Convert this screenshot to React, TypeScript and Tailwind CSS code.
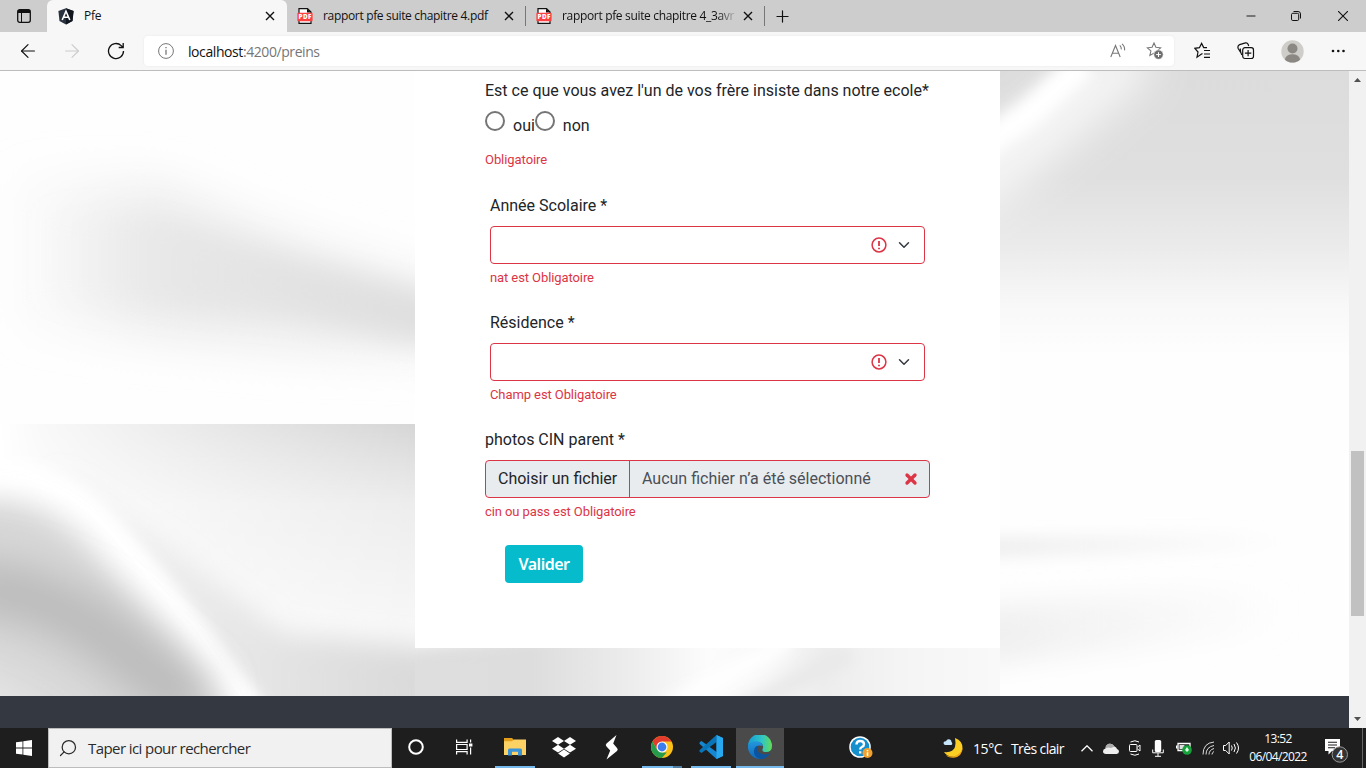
import React from "react";
import { ArrowLeft, ArrowRight, X, Plus, Search, Minus } from "lucide-react";

const UI = "font-['Open_Sans','Noto_Sans',sans-serif]";

function PdfIcon() {
  return (
    <svg width="16" height="16" viewBox="0 0 16 16" className="shrink-0">
      <path d="M2 .6h8.5L14 4v11.4H2z" fill="#fff" stroke="#111" strokeWidth="1.2" />
      <path d="M10 .6V4.4H14z" fill="#111" />
      <rect x=".4" y="4.8" width="15.2" height="8.4" rx=".8" fill="#fb4141" />
      <text x="1.5" y="11.3" fill="#fff" fontSize="6.3" fontWeight="800" fontFamily="Open Sans" textLength="13">PDF</text>
    </svg>
  );
}

function Close() {
  return (
    <svg width="10" height="10" viewBox="0 0 10 10" className="shrink-0">
      <path d="M1 1l8 8M9 1L1 9" stroke="#111" strokeWidth="1.4" />
    </svg>
  );
}

function TitleBar() {
  return (
    <div className="flex h-8 shrink-0 bg-[#cdcdcd]">
      <div className="flex w-[47px] items-center justify-center">
        <svg width="14" height="14" viewBox="0 0 14 14">
          <rect x=".7" y=".7" width="12.6" height="12.6" rx="2" fill="none" stroke="#111" strokeWidth="1.3" />
          <path d="M1 1h12v3H1z" fill="#111" />
          <path d="M4.5 4v9" stroke="#111" strokeWidth="1" />
        </svg>
      </div>
      <div className="flex w-60 items-center rounded-t-md bg-[#f7f7f7] pr-[12px] pl-[11px]">
        <svg width="16" height="17" viewBox="0 0 16 17">
          <path d="M8 .3l7.6 2.6-1.1 10L8 16.6l-6.5-3.7L.4 2.9z" fill="#29323f" />
          <path d="M8 .3l7.6 2.6-1.1 10L8 16.6z" fill="#10151f" />
          <path d="M4.2 12L8 3.2l3.8 8.8M5.8 9.3h4.4" fill="none" stroke="#fff" strokeWidth="1.6" />
        </svg>
        <span className={`${UI} ml-[10px] flex-1 text-[12px] tracking-[-0.3px] text-[#111]`}>Pfe</span>
        <Close />
      </div>
      <div className="flex w-[239px] items-center pl-[10px]">
        <PdfIcon />
        <span className={`${UI} ml-[10px] w-[181px] text-[12px] tracking-[-0.33px] whitespace-nowrap text-[#111]`}>
          rapport pfe suite chapitre 4.pdf
        </span>
        <Close />
        <div className="ml-[11px] h-5 w-px bg-[#777]" />
      </div>
      <div className="flex w-[239px] items-center pl-[10px]">
        <PdfIcon />
        <div className="ml-[10px] flex w-[181px]">
          <span
            className={`${UI} bg-[linear-gradient(90deg,#111_90%,#b5b5b5)] bg-clip-text pr-px text-[12px] tracking-[-0.33px] whitespace-nowrap text-transparent`}
          >
            rapport pfe suite chapitre 4_3avr
          </span>
        </div>
        <Close />
        <div className="ml-[11px] h-5 w-px bg-[#777]" />
      </div>
      <div className="flex flex-1 items-center pl-[8px]">
        <Plus size={19} strokeWidth={1.5} color="#111" />
      </div>
      <div className="flex items-center">
        <Minus size={14} strokeWidth={1.6} color="#111" className="mr-[33px]" />
        <svg width="10" height="10" viewBox="0 0 10 10" fill="none" stroke="#111" className="mr-[37px]">
          <rect x=".5" y="2.3" width="7.2" height="7.2" rx="1.3" />
          <path d="M2.5.5h4.5a2.5 2.5 0 0 1 2.5 2.5v4.5" />
        </svg>
        <svg width="10" height="10" viewBox="0 0 10 10" stroke="#111" className="mr-[18px]">
          <path d="M0 0l10 10M10 0L0 10" strokeWidth="1.1" />
        </svg>
      </div>
    </div>
  );
}

const STAR = "M7.5 1l1.9 4.3 4.7.5-3.5 3.1 1 4.6-4.1-2.4-4.1 2.4 1-4.6L.9 5.8l4.7-.5z";

function AddressBar() {
  return (
    <div className="flex h-[39px] shrink-0 items-center border-b border-[#bdbdbd] bg-[#f7f7f7]">
      <ArrowLeft size={22} strokeWidth={1.3} color="#111" className="ml-[17px]" />
      <ArrowRight size={22} strokeWidth={1.3} color="#ccc" className="ml-[22px]" />
      <svg width="18" height="18" viewBox="0 0 18 18" className="ml-6" fill="none" stroke="#111" strokeWidth="1.3">
        <path d="M16.5 9a7.5 7.5 0 1 1-2.3-5.4L16 5.3M16.2 1v4.5h-4.5" />
      </svg>
      <div className="ml-[19px] flex h-[30px] w-[1030px] items-center rounded bg-white pl-[14px] shadow-[0_0_2px_#e5e5e5]">
        <svg width="16" height="16" viewBox="0 0 16 16" fill="none" stroke="#777">
          <circle cx="8" cy="8" r="7.4" />
          <path d="M8 6.7v5M8 4v1.3" strokeWidth="1.3" />
        </svg>
        <span className={`${UI} ml-[14px] flex-1 text-[14px] tracking-[-0.42px] text-[#767676]`}>
          <span className="text-[#111]">localhost</span>:4200/preins
        </span>
        <svg width="16" height="16" viewBox="0 0 16 16" fill="none" stroke="#777" className="mr-5">
          <path d="M.8 14L5.5 2.5 10.2 14M2.4 10.2h6.2M9.8 2.4q1.7 1.5 1.5 4M12 .9q3 2.4 2.6 6.5" strokeWidth="1.1" />
        </svg>
        <svg width="18" height="18" viewBox="0 0 18 18" fill="none" className="mr-[10px]">
          <path d={STAR} transform="translate(.5 0)" stroke="#777" strokeWidth="1.1" />
          <circle cx="12.5" cy="12.6" r="4.7" fill="#6d6d6d" stroke="#fff" strokeWidth=".6" />
          <path d="M12.5 10.2v4.8M10.1 12.6h4.8" stroke="#fff" />
        </svg>
      </div>
      <svg width="18" height="18" viewBox="0 0 18 18" fill="none" stroke="#111" strokeWidth="1.2" className="ml-5">
        <path d="M8.5 11.5L7.2 12.3 3 15.2l1-5.2L.9 6.3l4.5-.6L7.6 1.4l2.1 4.2h3.3M10 8.5h6M10 12h6M10 15.3h6" />
      </svg>
      <svg width="18" height="18" viewBox="0 0 18 18" fill="none" stroke="#111" strokeWidth="1.2" className="ml-[25px]">
        <path d="M4 11L1.2 6.5Q.2 3.6 2.6 2.6L8.500.9q1.800-.4 2.600 1.400l.6 1.700M4.800 13Q3.200 10 3.300 6.500" />
        <rect x="5.700" y="5.700" width="10.800" height="10.800" rx="2.200" fill="#f7f7f7" />
        <path d="M11.100 7.900v6.400M7.900 11.100h6.400" />
      </svg>
      <svg width="23" height="23" viewBox="0 0 23 23" className="ml-[26px]">
        <circle cx="11.5" cy="11.5" r="11.2" fill="#cfcdc9" />
        <circle cx="11.5" cy="8.5" r="5" fill="#8b8783" />
        <path d="M3.8 19.4a8 7 0 0 1 15.4 0 11 11 0 0 1-15.4 0" fill="#8b8783" />
      </svg>
      <svg width="14" height="4" viewBox="0 0 14 4" className="ml-[27px]" fill="#111">
        <circle cx="2" cy="2" r="1.3" />
        <circle cx="7.3" cy="2" r="1.3" />
        <circle cx="12.5" cy="2" r="1.3" />
      </svg>
    </div>
  );
}

function Backdrop() {
  return (
    <svg className="absolute inset-0" width="1349" height="625" viewBox="0 0 1349 625">
      <defs>
        <filter id="b6" filterUnits="userSpaceOnUse" x="-100" y="-100" width="1600" height="900"><feGaussianBlur stdDeviation="7" /></filter>
        <filter id="b12" filterUnits="userSpaceOnUse" x="-100" y="-100" width="1600" height="900"><feGaussianBlur stdDeviation="13" /></filter>
        <filter id="b22" filterUnits="userSpaceOnUse" x="-100" y="-100" width="1600" height="900"><feGaussianBlur stdDeviation="22" /></filter>
        <linearGradient id="rightFade" x1="0" y1="0" x2="0" y2="1">
          <stop offset="0" stopColor="#dcdcdc" />
          <stop offset=".37" stopColor="#dfdfdf" />
          <stop offset=".62" stopColor="#ebebeb" />
          <stop offset=".82" stopColor="#f8f8f8" />
          <stop offset="1" stopColor="#fefefe" />
        </linearGradient>
        <linearGradient id="topShade" x1="0" y1="0" x2="0" y2="1">
          <stop offset="0" stopColor="#d6d6d6" />
          <stop offset=".15" stopColor="#dfdfdf" />
          <stop offset=".4" stopColor="#ededed" />
          <stop offset="1" stopColor="#f7f7f7" />
        </linearGradient>
        <linearGradient id="leftWhite" gradientUnits="userSpaceOnUse" x1="0" y1="0" x2="415" y2="0">
          <stop offset="0" stopColor="#fff" />
          <stop offset=".1" stopColor="#fff" stopOpacity=".85" />
          <stop offset=".5" stopColor="#fff" stopOpacity=".45" />
          <stop offset="1" stopColor="#fff" stopOpacity="0" />
        </linearGradient>
        <linearGradient id="bandWide" gradientUnits="userSpaceOnUse" x1="0" y1="0" x2="160" y2="0">
          <stop offset="0" stopColor="#ededed" stopOpacity="0" />
          <stop offset="1" stopColor="#ededed" />
        </linearGradient>
        <linearGradient id="bandCore" gradientUnits="userSpaceOnUse" x1="40" y1="0" x2="415" y2="0">
          <stop offset="0" stopColor="#dddddd" stopOpacity="0" />
          <stop offset=".4" stopColor="#dddddd" stopOpacity=".4" />
          <stop offset="1" stopColor="#dddddd" stopOpacity=".9" />
        </linearGradient>
        <linearGradient id="foldShade" gradientUnits="userSpaceOnUse" x1="50" y1="0" x2="415" y2="0">
          <stop offset="0" stopColor="#dadada" stopOpacity=".25" />
          <stop offset=".35" stopColor="#dadada" stopOpacity=".45" />
          <stop offset=".65" stopColor="#dadada" stopOpacity=".7" />
          <stop offset="1" stopColor="#dadada" />
        </linearGradient>
        <linearGradient id="fadeRight" gradientUnits="userSpaceOnUse" x1="1000" y1="0" x2="1290" y2="0">
          <stop offset="0" stopColor="#f0f0f0" />
          <stop offset="1" stopColor="#f0f0f0" stopOpacity="0" />
        </linearGradient>
        <linearGradient id="strip" gradientUnits="userSpaceOnUse" x1="415" y1="610" x2="1000" y2="610">
          <stop offset="0" stopColor="#dedede" />
          <stop offset=".2" stopColor="#dddddd" />
          <stop offset=".38" stopColor="#eeeeee" />
          <stop offset=".5" stopColor="#fcfcfc" />
          <stop offset=".6" stopColor="#f8f8f8" />
          <stop offset=".7" stopColor="#ededed" />
          <stop offset=".85" stopColor="#f5f5f5" />
          <stop offset="1" stopColor="#f9f9f9" />
        </linearGradient>
        <clipPath id="upper"><rect width="415" height="353" /></clipPath>
        <clipPath id="lower"><rect y="353" width="415" height="272" /></clipPath>
        <clipPath id="mid"><rect x="415" y="577" width="585" height="48" /></clipPath>
        <clipPath id="right"><rect x="1000" width="349" height="625" /></clipPath>
      </defs>
      <rect width="1349" height="625" fill="#fefefe" />
      <g clipPath="url(#upper)">
        <path d="M0 105L160 112 290 165 480 225V285L300 280 0 255z" fill="url(#bandWide)" filter="url(#b22)" />
        <path d="M40 140L160 145 283 182 480 238V272L400 268 283 245 40 230z" fill="url(#bandCore)" filter="url(#b12)" />
      </g>
      <g clipPath="url(#lower)">
        <rect y="353" width="415" height="200" fill="url(#topShade)" />
        <rect y="552" width="415" height="75" fill="#f7f7f7" />
        <rect y="353" width="415" height="272" fill="url(#leftWhite)" />
        <path d="M50 398L167 475 283 562 520 588V700H290L160 520z" fill="url(#foldShade)" filter="url(#b12)" />
        <path d="M-40 402Q50 394 105 454T256 645" fill="none" stroke="#fff" strokeWidth="28" filter="url(#b6)" />
        <path d="M-60 428H0Q55 436 90 478T175 572L240 670H-60z" fill="#d8d8d8" filter="url(#b12)" />
        <path d="M-40 512L30 525 90 553 200 640" fill="none" stroke="#b8b8b8" strokeWidth="52" filter="url(#b22)" />
        <path d="M-40 590L90 665H-40z" fill="#e8e8e8" filter="url(#b22)" />
      </g>
      <g clipPath="url(#mid)">
        <rect x="415" y="577" width="585" height="48" fill="url(#strip)" />
        <path d="M400 565H560L400 580z" fill="#f2f2f2" filter="url(#b6)" />
        <path d="M660 640L790 570" stroke="#fff" strokeWidth="16" filter="url(#b6)" />
        <path d="M740 640L850 582" stroke="#e9e9e9" strokeWidth="20" filter="url(#b6)" />
      </g>
      <g clipPath="url(#right)">
        <rect x="1000" width="349" height="285" fill="url(#rightFade)" />
        <path d="M960 125L1030 72 1140-20" fill="none" stroke="#fff" strokeWidth="50" strokeOpacity=".8" filter="url(#b22)" />
        <path d="M980 78L1030 42 1085-8" fill="none" stroke="#fff" strokeWidth="30" filter="url(#b6)" />
        <path d="M960 466L1290 460V480L960 488z" fill="url(#fadeRight)" filter="url(#b6)" />
        <path d="M940 538L1180 520 1290 520V560L940 600z" fill="url(#fadeRight)" filter="url(#b12)" />
      </g>
    </svg>
  );
}

function SelectField({ label, error }: { label: string; error: string }) {
  return (
    <div className="mx-[5px] h-[117px]">
      <div className="pt-px text-[16px] leading-6">{label}</div>
      <div className="mt-2 flex h-[38px] items-center justify-end rounded border border-[#dc3545] bg-white pr-[14px]">
        <svg width="16" height="16" viewBox="0 0 16 16" fill="none" stroke="#dc3545" strokeWidth="1.5">
          <circle cx="8" cy="8" r="6.9" />
          <path d="M8 4v5M8 10.7v1.6" strokeWidth="1.8" />
        </svg>
        <svg width="12" height="12" viewBox="0 0 16 16" fill="none" stroke="#343a40" strokeWidth="2" strokeLinecap="round" strokeLinejoin="round" className="ml-[11px]">
          <path d="M2 5l6 6 6-6" />
        </svg>
      </div>
      <div className="mt-1 text-[13px] leading-5 tracking-[-0.09px] text-[#dc3545]">{error}</div>
    </div>
  );
}

function Radio({ label }: { label: string }) {
  return (
    <label className="flex">
      <span className="h-5 w-5 rounded-full border-2 border-[#757575]" />
      <span className="mt-[3px] ml-2 text-[16px] leading-6">{label}</span>
    </label>
  );
}

function FormCard() {
  return (
    <div className="relative ml-[415px] h-[577px] w-[585px] bg-white pr-[70px] pl-[70px] font-[Roboto,sans-serif] text-[#212529]">
      <div className="pt-2 text-[16px] leading-6 whitespace-nowrap">
        Est ce que vous avez l'un de vos frère insiste dans notre ecole*
      </div>
      <div className="mt-2 flex h-[39px]">
        <Radio label="oui" />
        <Radio label="non" />
      </div>
      <div className="text-[13px] leading-5 tracking-[-0.06px] text-[#dc3545]">Obligatoire</div>
      <div className="mt-[23px]">
        <SelectField label="Année Scolaire *" error="nat est Obligatoire" />
        <SelectField label="Résidence *" error="Champ est Obligatoire" />
      </div>
      <div className="pt-px text-[16px] leading-6">photos CIN parent *</div>
      <div className="mt-2 flex h-[38px] items-center overflow-hidden rounded border border-[#dc3545] bg-[#e9ecef] text-[16px]">
        <div className="flex h-full w-[144px] items-center border-r border-[#dc3545] pl-3 whitespace-nowrap">Choisir un fichier</div>
        <div className="flex-1 pl-3 whitespace-nowrap text-[#495057]">Aucun fichier n’a été sélectionné</div>
        <X size={16} strokeWidth={5} color="#dc3545" className="mr-[10px]" />
      </div>
      <div className="mt-1 text-[13px] leading-5 tracking-[-0.09px] text-[#dc3545]">cin ou pass est Obligatoire</div>
      <button className="mt-[23px] ml-5 flex h-[38px] w-[78px] items-center justify-center rounded bg-[#06bbcc] font-['Noto_Sans','Open_Sans',sans-serif] text-[16px] font-semibold tracking-[-0.5px] text-white">
        Valider
      </button>
    </div>
  );
}

function ScrollBar() {
  return (
    <div className="flex w-[17px] flex-col items-center bg-[#f1f1f1]">
      <svg width="17" height="17" viewBox="0 0 17 17"><path d="M5 11l3.5-4L12 11z" fill="#505050" /></svg>
      <div className="mt-[363px] h-[165px] w-[13px] bg-[#c1c1c1]" />
      <div className="flex-1" />
      <svg width="17" height="17" viewBox="0 0 17 17"><path d="M5 6l3.5 4L12 6z" fill="#505050" /></svg>
    </div>
  );
}

function AppButton({ children, line = false, active = false, split = false }: { children: React.ReactNode; line?: boolean; active?: boolean; split?: boolean }) {
  return (
    <div className={`flex h-10 w-12 flex-col items-center ${active ? "bg-[#4a4a4a]" : ""}`}>
      <div className="flex h-[38px] items-center">{children}</div>
      <div className={`flex h-[2px] justify-end ${active ? "w-12" : "w-10"} ${line ? "bg-[#76b9ed]" : ""}`}>
        {split && <div className="h-[2px] w-[9px] bg-[#527ea1]" />}
      </div>
    </div>
  );
}

function TaskBar() {
  return (
    <div className={`flex h-10 shrink-0 items-center bg-[#1e1e1e] text-white ${UI}`}>
      <div className="flex h-10 w-12 items-center justify-center">
        <svg width="16" height="16" viewBox="0 0 16 16" fill="#fff">
          <path d="M0 2.3l6.5-.9v6.2H0zM7.3 1.3L16 0v7.6H7.3zM0 8.4h6.5v6.2L0 13.7zM7.3 8.4H16V16l-8.7-1.2z" />
        </svg>
      </div>
      <div className="flex h-10 w-[344px] items-center border border-[#bcbcbc] bg-[#f1f1f1] pl-[9px] text-[#2b2b2b]">
        <Search size={20} strokeWidth={1.5} className="-scale-x-100" />
        <span className="ml-[10px] text-[15px] tracking-[-0.58px]">Taper ici pour rechercher</span>
      </div>
      <AppButton>
        <svg width="16" height="16" viewBox="0 0 16 16"><circle cx="8" cy="8" r="6.8" fill="none" stroke="#fff" strokeWidth="2" /></svg>
      </AppButton>
      <AppButton>
        <svg width="17" height="16" viewBox="0 0 17 16" fill="none" stroke="#fff" strokeWidth="1.2">
          <path d="M.6.5v2.8h10.5V.5M.6 15.5v-2.8h10.5v2.8M.6 5.5h10.5v5H.6zM14.6.5v3M14.6 8.5v7" />
          <path d="M13 4.5h3.4v3H13z" fill="#fff" stroke="none" />
        </svg>
      </AppButton>
      <div className="ml-[3px] flex">
        <AppButton line>
          <svg width="22" height="18" viewBox="0 0 22 18">
            <path d="M0 0h8l2 2v4H0z" fill="#e5a01b" />
            <path d="M0 3.2h8L10 1.5h12V17H0z" fill="#fdd264" />
            <path d="M4 17.5V12q0-1.500 1.500-1.500h11q1.500 0 1.500 1.500v5.500h-4v-3.700H8v3.700z" fill="#3b93d8" />
          </svg>
        </AppButton>
        <AppButton>
          <svg width="24" height="21" viewBox="0 0 24 21" fill="#fff" className="ml-[2px]">
            <path d="M6 0l6 3.9-6 3.9L0 3.9zM18 0l6 3.9-6 3.9-6-3.9zM6 7.8l6 3.9-6 3.9-6-3.9zM18 7.8l6 3.9-6 3.9-6-3.9zM12 12.6l5.9 3.8L12 20.4l-5.9-4z" />
          </svg>
        </AppButton>
        <AppButton>
          <svg width="14" height="25" viewBox="0 0 14 25" fill="#fff" className="ml-[2px]">
            <path d="M11.5 0L1.5 8.5Q0 10 1.5 11.5L5.2 15.5 1.5 24.5 12 16Q13.5 14.5 12 13L8.2 8.5z" />
          </svg>
        </AppButton>
      </div>
      <div className="ml-[3px] flex gap-px">
        <AppButton line split>
          <svg width="22" height="22" viewBox="0 0 22 22">
            <circle cx="11" cy="11" r="11" fill="#fbc116" />
            <path d="M11 11L6.2 13.8 1.5 5.5A11 11 0 0 1 20.5 5.5H11z" fill="#e33b2e" />
            <path d="M1.5 5.5L6.2 13.8 11 16.5h4.8L10.8 22A11 11 0 0 1 1.5 5.5" fill="#269b4b" />
            <circle cx="11" cy="11" r="5.5" fill="#fff" />
            <circle cx="11" cy="11" r="4.4" fill="#3b7ded" />
          </svg>
        </AppButton>
        <AppButton line>
          <svg width="24" height="24" viewBox="0 0 24 24">
            <path d="M17.5 0L24 3v18l-6.5 3L1 9.3Q-.2 8.2 1.2 6.8L2.5 6 17.5 17z" fill="#1688d1" />
            <path d="M17.5 7L2.5 18 1 17Q-.2 15.9 1 14.7L17.5 0z" fill="#0875b9" />
            <path d="M17.5 0L24 3v18l-6.5 3z" fill="#28a8ef" />
          </svg>
        </AppButton>
        <AppButton line active>
          <svg width="24" height="24" viewBox="0 0 24 24">
            <defs>
              <linearGradient id="edgeTop" x1="0" x2="1"><stop stopColor="#159bd8" /><stop offset=".6" stopColor="#31c7c4" /><stop offset="1" stopColor="#64dc51" /></linearGradient>
              <linearGradient id="edgeBlue" x1="0" y1="0" x2="0" y2="1"><stop stopColor="#2398df" /><stop offset="1" stopColor="#1267b6" /></linearGradient>
            </defs>
            <path d="M0 11A12 12 0 0 1 24 11Q24 17 18 17 13 17 15 13 16 8 9.5 7 3 6.5 0 11" fill="url(#edgeTop)" />
            <path d="M0 11Q3 6 9 6.3 13 6.8 15 11 8 9 8 14.5 9 23 15 23.6A12 12 0 0 1 0 11" fill="url(#edgeBlue)" />
            <path d="M9.5 10.5Q8 20 18 19.5 21 19 22.5 18 18 24.5 12 24 4 21 6.5 13.5 7.5 11.5 9.5 10.5" fill="#0b549f" />
          </svg>
        </AppButton>
      </div>
      <svg width="25" height="24" viewBox="0 0 25 24" className="ml-[65px]">
        <circle cx="11" cy="11" r="10.8" fill="#fff" />
        <circle cx="11" cy="11" r="9.3" fill="#168fcd" />
        <path d="M7.5 8.5Q7.5 5 11.2 5T15 8.2Q15 10 12.8 11 11.2 11.8 11.2 13.5M11.2 15.3v2.3" fill="none" stroke="#fff" strokeWidth="2.4" />
        <circle cx="18.5" cy="17" r="5" fill="#f2a22c" />
        <path d="M18.5 14v1.3M18.5 16.3v3.6" stroke="#fff" strokeWidth="1.5" />
      </svg>
      <svg width="21" height="20" viewBox="0 0 21 20" className="ml-[69px]">
        <path d="M12 0q8 3 7.5 10.5Q18 18 11 18.8 4 19 1 14q9 1 11-5 1-4 0-9" fill="#fdce24" />
        <path d="M3 17q6 3 11 0 5-3 6-8-1 10-9 10.7Q5 20 3 17" fill="#efa41c" />
        <path d="M2 7Q-.2 6 1 3.8 2 3 3 3.2 4 .5 7 1.5 8.5 2 8.5 4 10 5.5 8.5 7z" fill="#c4e5fb" />
      </svg>
      <span className="ml-[9px] w-[38px] text-[14px] tracking-[-0.4px] whitespace-nowrap">15°C</span>
      <span className="w-[70px] text-[14px] tracking-[-0.6px] whitespace-nowrap">Très clair</span>
      <svg width="12" height="7" viewBox="0 0 12 7" fill="none" stroke="#fff" strokeWidth="1.3"><path d="M.5 6.3L6 .8l5.5 5.5" /></svg>
      <svg width="16" height="11" viewBox="0 0 16 11" className="ml-[10px]">
        <path d="M3 11Q0 11 0 8.3 0 6 2.5 5.5 2.5 2 6 .8 9.5 0 11.5 3.5 13.5 4 14 6 16 6.5 16 8.5T13.5 11z" fill="#eee" />
        <path d="M2.5 5.5Q2.5 2 6 .8 9.5 0 11.5 3.5L8 5Q5 4 2.5 5.5" fill="#aaa" />
      </svg>
      <svg width="12" height="16" viewBox="0 0 12 16" fill="none" stroke="#fff" className="ml-[10px]">
        <rect x=".5" y="4.5" width="7.5" height="7" rx="1" />
        <path d="M8.5 7L11 5v6L8.5 9M1.5 2Q6 -.5 10 2M1.5 14Q6 16.5 10 14" />
      </svg>
      <svg width="12" height="17" viewBox="0 0 12 17" className="ml-[11px]">
        <rect x="2.8" y="0" width="6.4" height="12" rx="1.5" fill="#fff" />
        <path d="M.7 9.5v3.3h10.6V9.5M6 13v3.3M3 16.3h6" stroke="#fff" fill="none" />
      </svg>
      <svg width="16" height="14" viewBox="0 0 16 14" className="ml-[12px]">
        <path d="M2 2.5h12v7H2zM.5 4.5v3" fill="none" stroke="#fff" strokeWidth="1.3" />
        <path d="M3.5 4h5v4h-5z" fill="#ddd" />
        <circle cx="11" cy="9" r="4.8" fill="#16a33b" />
        <path d="M11 6l2 3-2 2-2-2z" fill="#e3ffe5" />
      </svg>
      <svg width="13" height="14" viewBox="0 0 13 14" fill="none" stroke="#ddd" className="ml-[10px]">
        <path d="M1 13.5Q1 2 12 1M4 13.5Q4 6 12 4.5M7 13.5Q7 9 12 7.5M10 13.5Q10 11.5 12 10.5" />
      </svg>
      <svg width="17" height="14" viewBox="0 0 17 14" fill="none" stroke="#fff" className="ml-[8px]">
        <path d="M.5 4.5h2.2L6.2 1v12L2.7 9.5H.5zM8.5 4.5q1.5 2.5 0 5M11 3q2.8 4 0 8M13.5 1.5q4 5.5 0 11" />
      </svg>
      <div className="ml-[7px] w-[62px] text-center text-[12px] leading-[18px] tracking-[-0.6px] whitespace-nowrap">
        <div>13:52</div>
        <div>06/04/2022</div>
      </div>
      <svg width="24" height="24" viewBox="0 0 24 24" className="mt-[6px] ml-[15px]">
        <path d="M1 0h15v12H8l-3.5 3.5V12H1z" fill="#fff" />
        <path d="M4 3.3h9M4 6h9M4 8.7h7" stroke="#1e1e1e" strokeWidth="1.1" />
        <circle cx="15.8" cy="15.5" r="7.7" fill="#333" stroke="#999" />
        <text x="12.3" y="20" fill="#fff" fontSize="12.5" fontWeight="600" fontFamily="Open Sans">4</text>
      </svg>
      <div className="ml-[14px] h-10 w-px bg-[#666]" />
    </div>
  );
}

export default function App() {
  return (
    <div className="flex h-[768px] w-[1366px] flex-col overflow-hidden">
      <TitleBar />
      <AddressBar />
      <div className="flex min-h-0 flex-1">
        <main className="flex w-[1349px] flex-col">
          <section className="relative h-[625px] shrink-0 overflow-hidden">
            <Backdrop />
            <FormCard />
          </section>
          <footer className="flex-1 bg-[#343840]" />
        </main>
        <ScrollBar />
      </div>
      <TaskBar />
    </div>
  );
}
